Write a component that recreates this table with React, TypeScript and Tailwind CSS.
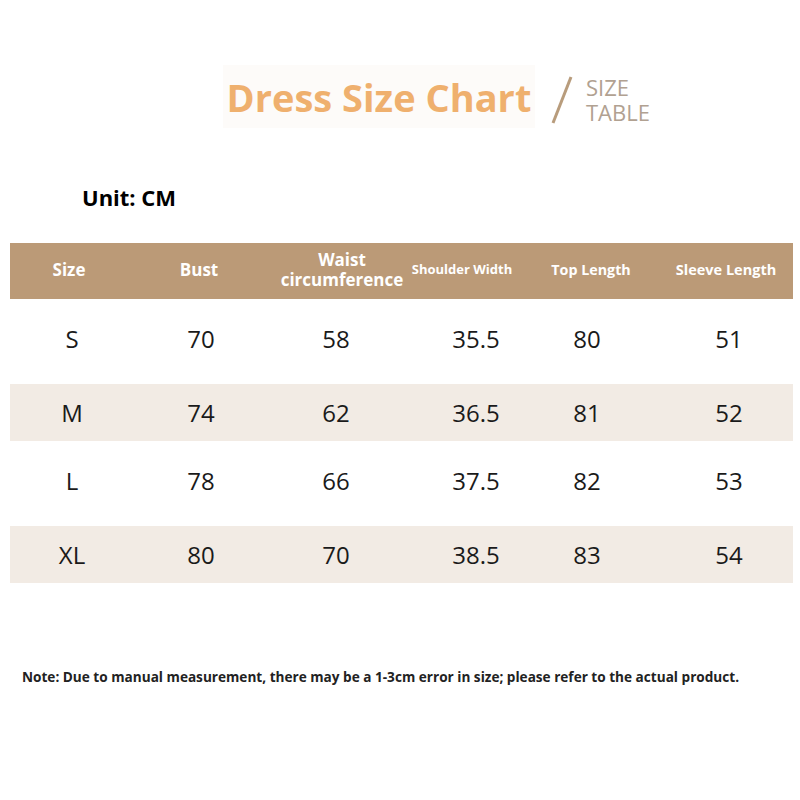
import React from "react";

const rows = [
  ["S", "70", "58", "35.5", "80", "51"],
  ["M", "74", "62", "36.5", "81", "52"],
  ["L", "78", "66", "37.5", "82", "53"],
  ["XL", "80", "70", "38.5", "83", "54"],
];

const dataPad = ["", "", "", "pl-[24px]", "pl-[6px]", "pl-[21px]"];

export default function App() {
  return (
    <div className="w-[800px] h-[800px] bg-white font-['Open_Sans',sans-serif] flex flex-col">
      <div className="flex items-center pt-[65px] pl-[223px]">
        <div className="h-[63px] w-[312px] bg-[#fdfbf9] flex items-center justify-center">
          <span className="text-[38px] leading-none font-bold text-[#efb06e]">Dress Size Chart</span>
        </div>
        <svg width="25" height="50" viewBox="0 0 25 50" className="ml-[15px] mt-[7px]">
          <line x1="21" y1="2" x2="3" y2="48" stroke="#b89c7c" strokeWidth="3" />
        </svg>
        <div className="ml-[11px] mt-[7px] flex flex-col text-[22px] leading-[25px] text-[#b1a191]">
          <span>SIZE</span>
          <span>TABLE</span>
        </div>
      </div>
      <div className="pl-[82px] mt-[54px] text-[22px] leading-[30px] font-bold text-black">Unit: CM</div>
      <div className="mt-[31px] ml-[10px] w-[783px] flex flex-col">
        <div className="grid grid-cols-[124px_134px_136px_120px_120px_149px] h-[56px] pb-[3px] bg-[#bb9a77] text-white font-bold items-center">
          <div className="text-center text-[17px] pr-[6px]">Size</div>
          <div className="text-center text-[17px] pr-[4px]">Bust</div>
          <div className="text-center text-[17px] leading-[20px] pl-[12px] whitespace-nowrap">Waist<br />circumference</div>
          <div className="text-center text-[13px] pr-[4px] whitespace-nowrap">Shoulder Width</div>
          <div className="text-center text-[14.3px] pl-[14px] whitespace-nowrap">Top Length</div>
          <div className="text-center text-[14.5px] pl-[15px] whitespace-nowrap">Sleeve Length</div>
        </div>
        {rows.map((r, i) => (
          <div
            key={i}
            className={
              i % 2 === 0
                ? "grid grid-cols-[124px_134px_136px_120px_120px_149px] h-[85px] pb-[6px] items-center bg-white"
                : "grid grid-cols-[124px_134px_136px_120px_120px_149px] h-[57px] items-center bg-[#f2ebe4]"
            }
          >
            {r.map((v, j) => (
              <div key={j} className={`text-center text-[24px] text-[#1a1a1a] ${dataPad[j]}`}>
                {v}
              </div>
            ))}
          </div>
        ))}
      </div>
      <div className="pl-[22px] mt-[85px] text-[13.6px] leading-[18px] font-bold text-[#222222] whitespace-nowrap">
        Note: Due to manual measurement, there may be a 1-3cm error in size; please refer to the actual product.
      </div>
    </div>
  );
}
